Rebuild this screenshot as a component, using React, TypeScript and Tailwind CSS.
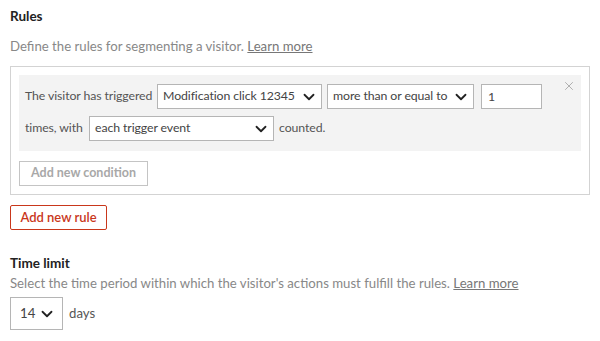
import { ChevronDown, X } from "lucide-react"

function Select({ label, className }: { label: string; className: string }) {
  return (
    <div
      className={`flex shrink-0 items-center justify-between border border-[#b5b5b5] bg-white pl-[5px] pr-[3px] text-[#444] ${className}`}
    >
      <span className="whitespace-nowrap">{label}</span>
      <ChevronDown size={18} strokeWidth={2.4} className="shrink-0 text-[#222]" />
    </div>
  )
}

export default function App() {
  return (
    <div
      className="w-[600px] h-[341px] bg-white px-[10px] pt-[6px] text-[13.2px] text-[#333]"
      style={{ fontFamily: "Lato, 'Open Sans', sans-serif" }}
    >
      <h2 className="text-[13.5px] font-bold leading-[20px] text-[#222]">Rules</h2>
      <p className="mt-[10px] leading-[20px] text-[#888]">
        Define the rules for segmenting a visitor.{" "}
        <a className="underline text-[#777]">Learn more</a>
      </p>

      <div className="mt-[10px] w-[580px] border border-[#d3d3d3] px-[8px] pt-[8px] pb-[8px]">
        <div className="relative bg-[#f3f3f3] px-[6px] pt-[9px] pb-[10px] text-[12.3px] tracking-[-0.1px] text-[#555]">
          <button className="absolute right-[5px] top-[4px] text-[#aaa]">
            <X size={14} strokeWidth={1.6} />
          </button>
          <div className="flex items-center">
            <span className="w-[132px] shrink-0 whitespace-nowrap">The visitor has triggered</span>
            <Select label="Modification click 12345" className="h-[25px] w-[165px]" />
            <Select label="more than or equal to" className="ml-[5px] h-[25px] w-[147px]" />
            <div className="ml-[7px] h-[25px] w-[61px] shrink-0 border border-[#b5b5b5] bg-white pl-[6px] leading-[23px] text-[#444]">
              1
            </div>
          </div>
          <div className="mt-[7px] flex items-center">
            <span className="w-[64px] shrink-0 whitespace-nowrap">times, with</span>
            <Select label="each trigger event" className="h-[25px] w-[185px]" />
            <span className="ml-[5px]">counted.</span>
          </div>
        </div>
        <button className="mt-[10px] h-[25px] w-[129px] border border-[#c4c4c4] text-[12.5px] font-bold text-[#a8a8a8]">
          Add new condition
        </button>
      </div>

      <button className="mt-[10px] h-[25px] w-[97px] rounded-[2px] border border-[#c9371b] text-[13px] font-semibold text-[#c9371b]">
        Add new rule
      </button>

      <h2 className="mt-[23px] text-[13.5px] font-bold leading-[20px] text-[#222]">Time limit</h2>
      <p className="leading-[20px] text-[#888]">
        Select the time period within which the visitor's actions must fulfill the rules.{" "}
        <a className="underline text-[#777]">Learn more</a>
      </p>
      <div className="mt-[4px] flex items-center gap-[6px]">
        <Select label="14" className="h-[33px] w-[53px] pl-[9px] pr-[6px]" />
        <span className="text-[#555]">days</span>
      </div>
    </div>
  )
}
